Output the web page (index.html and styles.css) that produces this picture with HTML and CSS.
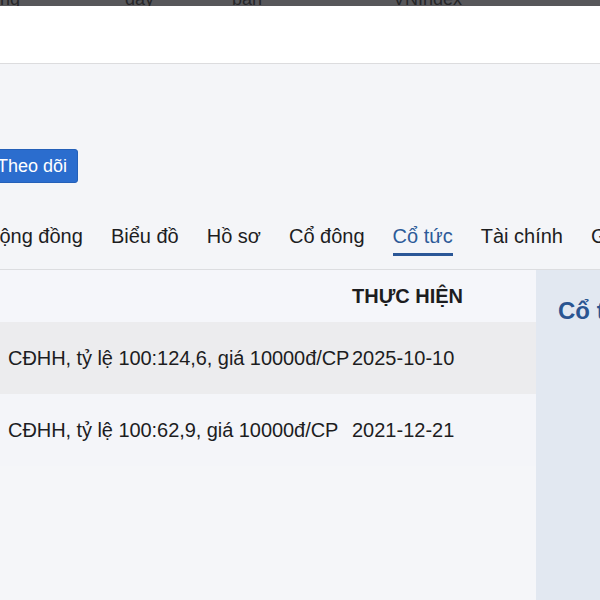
FILE: index.html
```html
<!DOCTYPE html>
<html lang="vi">
<head>
<meta charset="utf-8">
<title>Cổ tức</title>
<link rel="stylesheet" href="styles.css">
</head>
<body>
  <div class="topbar">
    <span>ng</span>
    <span>day</span>
    <span>bán</span>
    <span>VNIndex</span>
  </div>
  <div class="masthead"></div>

  <div class="profile">
    <button class="follow">Theo dõi</button>
  </div>

  <nav class="tabs">
    <a class="tab">Cộng đồng</a>
    <a class="tab">Biểu đồ</a>
    <a class="tab">Hồ sơ</a>
    <a class="tab">Cổ đông</a>
    <a class="tab active">Cổ tức</a>
    <a class="tab">Tài chính</a>
    <a class="tab">Giao dịch</a>
  </nav>

  <div class="content">
    <div class="dividends">
      <div class="row head">
        <div class="desc"></div>
        <div class="date">THỰC HIỆN</div>
      </div>
      <div class="row odd">
        <div class="desc">CĐHH, tỷ lệ 100:124,6, giá 10000đ/CP</div>
        <div class="date">2025-10-10</div>
      </div>
      <div class="row">
        <div class="desc">CĐHH, tỷ lệ 100:62,9, giá 10000đ/CP</div>
        <div class="date">2021-12-21</div>
      </div>
    </div>
    <aside class="side">
      <h2>Cổ tức</h2>
    </aside>
  </div>
</body>
</html>
```

FILE: styles.css
```css
* {
  margin: 0;
  padding: 0;
  box-sizing: border-box;
}

body {
  font-family: "Liberation Sans", Arial, sans-serif;
  background: #f4f5f8;
  color: #1d1d1f;
  overflow: hidden;
}

.topbar {
  height: 6px;
  overflow: hidden;
  background: #57575a;
  display: grid;
  grid-template-columns: 125px 107px 161px auto;
  grid-template-rows: 6px;
  align-items: end;
  font-size: 18px;
  line-height: 18px;
  color: #262628;
}

.topbar span {
  margin-bottom: -2px;
  white-space: nowrap;
}

.masthead {
  height: 58px;
  background: #fff;
  border-bottom: 1px solid #dcdcde;
}

.profile {
  padding-top: 85px;
  height: 119px;
}

.follow {
  margin-left: -14px;
  padding: 0 10px;
  height: 34px;
  font-family: "Liberation Sans", Arial, sans-serif;
  font-size: 18px;
  color: #fff;
  background: #2b6dce;
  border: 1px solid #2460b8;
  border-radius: 3px;
}

.tabs {
  display: flex;
  gap: 28px;
  margin-left: -15px;
  padding-top: 41px;
  height: 87px;
  border-bottom: 1px solid #dcdde0;
  white-space: nowrap;
}

.tab {
  font-size: 20px;
  line-height: 24px;
  height: 32px;
  padding-bottom: 5px;
  border-bottom: 3px solid transparent;
  color: #1d1d1f;
}

.tab.active {
  color: #2d5b98;
  border-bottom-color: #2b5797;
}

.content {
  display: flex;
  height: 400px;
}

.dividends {
  flex: 1;
  background: #f5f6f9;
}

.row {
  display: flex;
  align-items: center;
  height: 72px;
  font-size: 20px;
  white-space: nowrap;
  background: #f4f5f9;
}

.row.head {
  height: 52px;
  font-weight: bold;
  background: #f5f6fa;
}

.row.odd {
  background: #ececee;
}

.desc {
  width: 352px;
  padding-left: 8px;
  letter-spacing: -0.06px;
}

.side {
  width: 64px;
  background: #e2e8f1;
  padding: 27px 0 0 22px;
  overflow: hidden;
}

.side h2 {
  font-size: 24px;
  color: #2a5591;
  white-space: nowrap;
}
```
